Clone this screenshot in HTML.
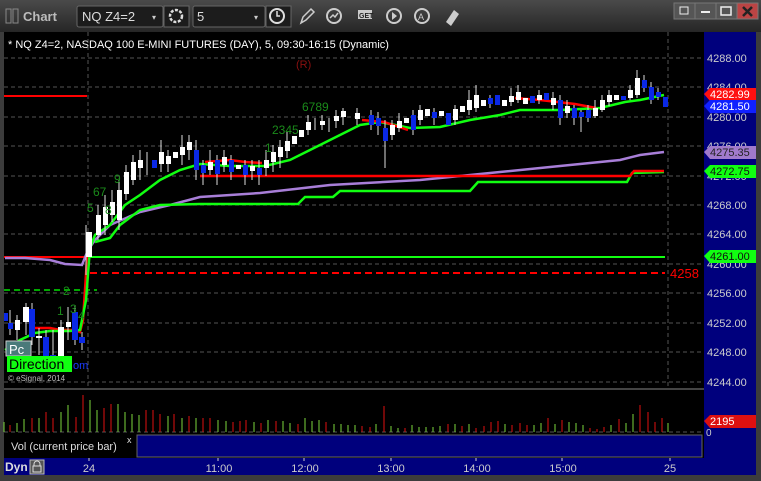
<!DOCTYPE html>
<html><head><meta charset="utf-8"><style>
body{margin:0;width:761px;height:481px;overflow:hidden;background:#2b2b2b;font-family:"Liberation Sans",sans-serif}
svg{display:block}
</style></head><body>
<svg width="761" height="481" viewBox="0 0 761 481" xmlns="http://www.w3.org/2000/svg" font-family="Liberation Sans, sans-serif">
<defs><linearGradient id="tb" x1="0" y1="0" x2="0" y2="1"><stop offset="0" stop-color="#4a4a4a"/><stop offset="1" stop-color="#262626"/></linearGradient></defs>
<rect width="761" height="481" fill="#3c3c3c"/>
<rect x="0" y="0" width="761" height="32" fill="url(#tb)"/>
<rect x="6" y="9" width="5" height="14" fill="none" stroke="#888"/><rect x="13" y="9" width="5" height="14" fill="none" stroke="#888"/>
<text x="23" y="21" font-size="13" fill="#bbb" font-weight="bold">Chart</text>
<rect x="77" y="6" width="86" height="21" rx="2" fill="#1c1c1c" stroke="#666"/>
<text x="82" y="21" font-size="13" fill="#ddd">NQ Z4=2</text><text x="152" y="20" font-size="8" fill="#ccc">▾</text>
<rect x="164" y="6" width="25" height="21" fill="#1c1c1c" stroke="#666"/><circle cx="176" cy="16" r="6" fill="none" stroke="#ddd" stroke-width="2.5" stroke-dasharray="3 1.5"/>
<rect x="193" y="6" width="72" height="21" rx="2" fill="#1c1c1c" stroke="#666"/>
<text x="197" y="21" font-size="13" fill="#ddd">5</text><text x="254" y="20" font-size="8" fill="#ccc">▾</text>
<rect x="266" y="6" width="25" height="21" fill="#1c1c1c" stroke="#666"/><circle cx="277" cy="16" r="7" fill="none" stroke="#ddd" stroke-width="2"/><path d="M277 11v5h3" stroke="#ddd" fill="none" stroke-width="1.5"/>
<path d="M301 23l2-6 8-8 3 3-8 8z" fill="none" stroke="#ccc" stroke-width="1.5"/>
<circle cx="334" cy="16" r="7" fill="none" stroke="#ccc" stroke-width="2"/><path d="M330 18l3-3 2 2 3-4" stroke="#ccc" fill="none" stroke-width="1.5"/>
<rect x="358" y="10" width="14" height="9" fill="#ccc"/><text x="359" y="18" font-size="7" fill="#222" font-weight="bold">GET</text>
<circle cx="394" cy="16" r="7" fill="none" stroke="#ccc" stroke-width="2"/><path d="M392 12l5 4-5 4z" fill="#ccc"/>
<circle cx="422" cy="16" r="7" fill="none" stroke="#ccc" stroke-width="2"/><text x="418" y="20" font-size="9" fill="#ccc">A</text>
<path d="M446 22l8-12 5 4-8 12z" fill="#ccc"/>
<rect x="674" y="3" width="21" height="16" fill="#555" stroke="#777"/><rect x="695" y="3" width="21" height="16" fill="#555" stroke="#777"/><rect x="716" y="3" width="21" height="16" fill="#555" stroke="#777"/><rect x="737" y="3" width="21" height="16" fill="#b44" stroke="#777"/>
<path d="M701 12h9" stroke="#eee" stroke-width="2"/><rect x="721" y="7" width="10" height="8" fill="none" stroke="#eee" stroke-width="1.5"/><path d="M743 7l9 9M752 7l-9 9" stroke="#222" stroke-width="2.5"/><rect x="680" y="7" width="8" height="7" fill="none" stroke="#eee"/>
<!-- chart -->
<rect x="4" y="32" width="700" height="356" fill="#000"/>
<rect x="704" y="32" width="52" height="356" fill="#00007d"/>
<text x="8" y="48" font-size="11" fill="#fff">* NQ Z4=2, NASDAQ 100 E-MINI FUTURES (DAY), 5, 09:30-16:15 (Dynamic)</text>
<g stroke="#555" stroke-dasharray="4 3" stroke-width="1">
<path d="M4 58H704M4 87H704M4 117H704M4 146H704M4 176H704M4 205H704M4 234H704M4 264H704M4 293H704M4 323H704M4 352H704M4 382H704"/>
<path d="M88 32V388M668 32V388M88 390V435M668 390V435"/>
<path d="M4 432H704"/>
</g>
<g font-size="11" fill="#ccc">
<text x="707" y="62">4288.00</text><text x="707" y="91">4284.00</text><text x="707" y="121">4280.00</text><text x="707" y="150">4276.00</text><text x="707" y="180">4272.00</text><text x="707" y="209">4268.00</text><text x="707" y="238">4264.00</text><text x="707" y="268">4260.00</text><text x="707" y="297">4256.00</text><text x="707" y="327">4252.00</text><text x="707" y="356">4248.00</text><text x="707" y="386">4244.00</text>
</g>
<text x="296" y="68" font-size="11" fill="#8a1010">(R)</text>
<!-- lines -->
<path d="M4 96H87" stroke="#f00" stroke-width="2"/>
<path d="M4 257H88" stroke="#f00" stroke-width="2"/>
<path d="M88 257H665" stroke="#1f1" stroke-width="2"/>
<path d="M90 273H665" stroke="#f00" stroke-width="2" stroke-dasharray="7 4"/>
<path d="M4 290H97" stroke="#0a0" stroke-width="2" stroke-dasharray="6 4"/>
<path d="M35 328H50L60 330H75L80 332L83 320L85 290L87 258" stroke="#f00" stroke-width="2.5" fill="none"/>
<path d="M5 258H25L50 260L65 264L82 265L88 250L95 240L110 225L140 212L170 205L200 197L260 193L330 185L420 180L500 172L560 166L620 160L640 155L664 152" stroke="#a87ed8" stroke-width="2.5" fill="none"/>
<path d="M95 242L110 238L120 225L140 210L160 205L200 204L298 204L305 197L333 197L340 191L470 191L478 182L627 182L632 173L664 172" stroke="#1f1" stroke-width="2.5" fill="none"/>
<path d="M200 176H630L634 171H664" stroke="#f00" stroke-width="2.5" fill="none"/>
<path d="M5 350L20 340L35 333L50 331L70 331L80 330L86 300L90 248L95 235L110 225L125 205L140 195L160 180L180 170L200 164L230 166L265 166L290 160L310 150L330 140L360 125L380 122L410 128L440 127L470 120L500 115L520 110L560 110L600 108L625 102L640 100L664 95" stroke="#1f1" stroke-width="2.5" fill="none"/>
<path d="M205 162L230 160L245 162L262 163M362 120L384 122L408 130M515 98L540 100L575 104L596 108" stroke="#f00" stroke-width="2.5" fill="none"/>
<!-- candles -->
<g stroke="#ddd" stroke-width="1">
<path d="M10 310V335M17 315V340M26 303V335M32 303V345M39 328V355M46 330V360M53 330V360M61 320V362M68 307V340M75 305V345M82 332V350M86 225V275M98 205V240M105 195V235M112 190V222M119 180V230M126 165V200M133 155V185M140 150V180M147 152V175M161 140V172M168 150V172M182 135V165M189 135V160M196 140V180M203 160V185M210 150V175M217 155V185M224 150V172M231 155V180M245 160V185M252 160V180M259 160V185M266 150V176M273 145V172M280 140V168M287 132V158M308 115V135M315 118V130M322 115V130M329 118V132M336 110V128M343 108V125M357 108V125M371 110V130M378 112V135M385 120V168M392 120V140M399 113V132M413 110V135M420 105V125M434 108V125M455 105V125M469 90V115M476 85V112M490 95V108M511 88V106M518 85V103M539 90V104M553 92V110M560 95V125M567 100V118M574 105V125M581 110V132M588 105V122M595 100V118M602 95V112M609 90V106M630 85V100M637 70V98M644 75V92M651 82V104M658 88V100"/>
</g>
<g fill="#fff">
<rect x="15" y="320" width="5" height="10"/><rect x="23" y="307" width="6" height="15"/><rect x="36" y="336" width="6" height="2"/><rect x="58" y="327" width="6" height="30"/><rect x="66" y="322" width="5" height="5"/>
<rect x="86" y="232" width="6" height="25"/><rect x="96" y="215" width="5" height="20"/><rect x="103" y="207" width="5" height="18"/><rect x="110" y="202" width="5" height="13"/><rect x="117" y="190" width="5" height="30"/><rect x="124" y="172" width="5" height="22"/><rect x="131" y="162" width="5" height="18"/><rect x="138" y="160" width="5" height="8"/><rect x="159" y="152" width="5" height="12"/><rect x="166" y="156" width="5" height="8"/><rect x="173" y="152" width="5" height="6"/><rect x="180" y="147" width="5" height="8"/><rect x="187" y="142" width="5" height="8"/><rect x="208" y="162" width="5" height="8"/><rect x="222" y="157" width="5" height="8"/><rect x="236" y="165" width="5" height="4"/><rect x="250" y="166" width="5" height="5"/><rect x="264" y="160" width="5" height="8"/><rect x="271" y="152" width="5" height="10"/><rect x="278" y="147" width="5" height="10"/><rect x="285" y="141" width="5" height="10"/><rect x="292" y="136" width="5" height="8"/><rect x="299" y="130" width="5" height="7"/><rect x="306" y="122" width="5" height="8"/><rect x="320" y="121" width="5" height="4"/><rect x="334" y="116" width="5" height="5"/><rect x="341" y="111" width="5" height="6"/><rect x="355" y="113" width="5" height="6"/><rect x="390" y="125" width="5" height="10"/><rect x="397" y="121" width="5" height="7"/><rect x="404" y="118" width="5" height="5"/><rect x="418" y="110" width="5" height="10"/><rect x="425" y="109" width="5" height="7"/><rect x="439" y="111" width="5" height="5"/><rect x="453" y="109" width="5" height="11"/><rect x="460" y="106" width="5" height="6"/><rect x="467" y="100" width="5" height="10"/><rect x="474" y="95" width="5" height="13"/><rect x="481" y="100" width="5" height="6"/><rect x="502" y="100" width="5" height="6"/><rect x="509" y="96" width="5" height="6"/><rect x="516" y="92" width="5" height="8"/><rect x="523" y="98" width="5" height="6"/><rect x="537" y="95" width="5" height="5"/><rect x="551" y="98" width="5" height="7"/><rect x="565" y="106" width="5" height="7"/><rect x="593" y="108" width="5" height="8"/><rect x="600" y="100" width="5" height="10"/><rect x="607" y="95" width="5" height="7"/><rect x="614" y="95" width="5" height="5"/><rect x="628" y="90" width="5" height="8"/><rect x="635" y="78" width="5" height="17"/>
</g>
<g fill="#0a28e6">
<rect x="4" y="313" width="4" height="8"/><rect x="8" y="323" width="5" height="6"/><rect x="29" y="309" width="6" height="28"/><rect x="43" y="337" width="6" height="20"/><rect x="50" y="355" width="6" height="3"/><rect x="72" y="312" width="6" height="28"/><rect x="79" y="337" width="6" height="6"/>
<rect x="152" y="160" width="5" height="8"/><rect x="194" y="150" width="5" height="20"/><rect x="201" y="165" width="5" height="8"/><rect x="215" y="160" width="5" height="14"/><rect x="229" y="160" width="5" height="12"/><rect x="243" y="165" width="5" height="10"/><rect x="257" y="168" width="5" height="7"/><rect x="369" y="115" width="5" height="10"/><rect x="376" y="118" width="5" height="8"/><rect x="383" y="128" width="5" height="13"/><rect x="411" y="115" width="5" height="15"/><rect x="432" y="112" width="5" height="6"/><rect x="446" y="113" width="5" height="12"/><rect x="488" y="98" width="5" height="6"/><rect x="495" y="95" width="5" height="10"/><rect x="530" y="96" width="5" height="7"/><rect x="544" y="93" width="5" height="7"/><rect x="558" y="100" width="5" height="18"/><rect x="572" y="108" width="5" height="10"/><rect x="579" y="112" width="5" height="5"/><rect x="586" y="110" width="5" height="8"/><rect x="621" y="96" width="5" height="4"/><rect x="642" y="80" width="5" height="8"/><rect x="649" y="87" width="5" height="13"/><rect x="656" y="92" width="5" height="5"/><rect x="663" y="97" width="5" height="10"/>
</g>
<g font-size="12" fill="#1a8a1a">
<text x="87" y="212">5</text><text x="93" y="196">67</text><text x="105" y="214">8</text><text x="114" y="183">9</text>
<text x="265" y="152">1</text><text x="272" y="134">2345</text><text x="302" y="111">6789</text>
<text x="57" y="315">1</text><text x="70" y="313">3</text><text x="78" y="320">4</text><text x="63" y="295">2</text>
</g>
<text x="670" y="278" font-size="13" fill="#f00">4258</text>
<rect x="6" y="341" width="25" height="15" fill="#4a7a7a" stroke="#ccc"/><text x="9" y="354" font-size="13" fill="#fff">Pc</text>
<rect x="7" y="356" width="65" height="16" fill="#1f1"/><text x="9" y="369" font-size="14" fill="#000">Direction</text>
<text x="73" y="369" font-size="11" fill="#1a3aff">om</text>
<text x="8" y="381" font-size="8" fill="#bbb">© eSignal, 2014</text>
<!-- right labels -->
<path d="M704 94l6-6h46v13h-46z" fill="#ff1010"/><text x="710" y="98" font-size="11" fill="#fff">4282.99</text>
<path d="M704 106l6-6h46v13h-46z" fill="#1020ff"/><text x="710" y="110" font-size="11" fill="#fff">4281.50</text>
<path d="M704 152l6-6h46v13h-46z" fill="#a07acc"/><text x="710" y="156" font-size="11" fill="#222">4275.35</text>
<path d="M704 171l6-6h46v13h-46z" fill="#1f1"/><text x="710" y="175" font-size="11" fill="#111">4272.75</text>
<path d="M704 256l6-6h46v13h-46z" fill="#1f1"/><text x="710" y="260" font-size="11" fill="#111">4261.00</text>
<!-- volume -->
<rect x="4" y="388" width="700" height="2" fill="#444"/>
<rect x="4" y="390" width="700" height="68" fill="#000"/>
<rect x="704" y="388" width="52" height="70" fill="#00007d"/>
<path d="M704 421l6-6h46v13h-46z" fill="#dd1010"/><text x="710" y="425" font-size="11" fill="#fff">2195</text>
<text x="706" y="436" font-size="10" fill="#ccc">0</text>
<path d="M4 432H704" stroke="#555" stroke-dasharray="4 3"/>
<g stroke-width="1">
<path stroke="#e01010" d="M10 432V425M32 432V418M46 432V412M53 432V418M76 432V417M83 432V395M104 432V408M111 432V404M146 432V410M153 432V410M160 432V414M174 432V414M189 432V416M203 432V418M210 432V418M233 432V422M240 432V421M246 432V420M261 432V423M276 432V421M298 432V424M326 432V422M362 432V426M370 432V427M384 432V406M405 432V428M448 432V424M462 432V426M476 432V428M484 432V426M491 432V422M498 432V421M512 432V425M520 432V423M527 432V425M548 432V418M562 432V420M590 432V428M597 432V429M604 432V427M619 432V419M640 432V405M648 432V412M655 432V422M662 432V418"/>
<path stroke="#7cd63c" d="M4 432V422M17 432V423M24 432V419M39 432V418M61 432V412M68 432V405M90 432V400M97 432V410M118 432V404M125 432V412M132 432V414M139 432V415M168 432V416M182 432V418M196 432V418M218 432V420M226 432V421M254 432V422M268 432V420M283 432V421M290 432V423M305 432V418M312 432V421M319 432V420M334 432V424M341 432V424M348 432V425M355 432V425M376 432V424M391 432V426M398 432V428M412 432V425M419 432V427M426 432V427M433 432V427M440 432V426M455 432V424M469 432V424M505 432V424M534 432V425M541 432V423M555 432V424M569 432V422M576 432V423M583 432V425M611 432V425M626 432V423M633 432V414M668 432V423"/>
</g>
<rect x="4" y="435" width="133" height="23" fill="#000"/>
<rect x="137" y="435" width="565" height="22" fill="#00007d" stroke="#666"/>
<text x="11" y="450" font-size="11" fill="#ddd">Vol (current price bar)</text>
<text x="127" y="443" font-size="9" fill="#ddd">x</text>
<!-- time axis -->
<rect x="4" y="458" width="752" height="17" fill="#00007d"/>
<text x="5" y="471" font-size="12" fill="#ddd" font-weight="bold">Dyn</text>
<rect x="30" y="460" width="14" height="14" fill="#555" stroke="#bbb"/><path d="M34 466v-2a3 3 0 0 1 6 0v2M33 466h8v6h-8z" fill="none" stroke="#ddd"/>
<g font-size="11" fill="#ccc" text-anchor="middle">
<text x="89" y="472">24</text><text x="219" y="472">11:00</text><text x="305" y="472">12:00</text><text x="391" y="472">13:00</text><text x="477" y="472">14:00</text><text x="563" y="472">15:00</text><text x="670" y="472">25</text>
</g>
<path d="M89 458v3M218 458v3M304 458v3M391 458v3M476 458v3M562 458v3M670 458v3" stroke="#ccc"/>
</svg>
</body></html>
